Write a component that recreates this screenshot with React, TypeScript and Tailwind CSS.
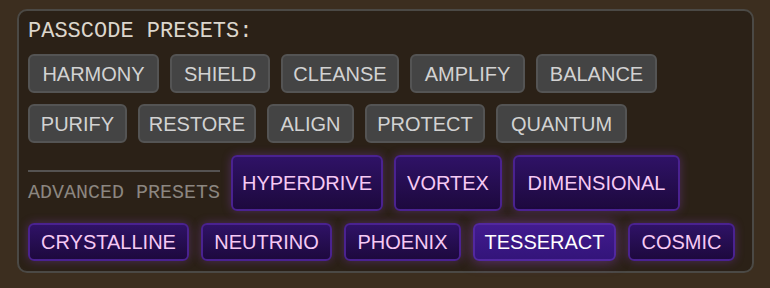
import {FunctionComponent} from 'react'

type Preset = {name: string; w: string}

const basicRows: Preset[][] = [
  [
    {name: 'HARMONY', w: 'w-[131px]'},
    {name: 'SHIELD', w: 'w-[100px]'},
    {name: 'CLEANSE', w: 'w-[118px]'},
    {name: 'AMPLIFY', w: 'w-[115px]'},
    {name: 'BALANCE', w: 'w-[121px]'},
  ],
  [
    {name: 'PURIFY', w: 'w-[99px]'},
    {name: 'RESTORE', w: 'w-[118px]'},
    {name: 'ALIGN', w: 'w-[87px]'},
    {name: 'PROTECT', w: 'w-[120px]'},
    {name: 'QUANTUM', w: 'w-[131px]'},
  ],
]

const advancedTop: Preset[] = [
  {name: 'HYPERDRIVE', w: 'w-[152px]'},
  {name: 'VORTEX', w: 'w-[108px]'},
  {name: 'DIMENSIONAL', w: 'w-[167px]'},
]

const advancedBottom: Preset[] = [
  {name: 'CRYSTALLINE', w: 'w-[161px]'},
  {name: 'NEUTRINO', w: 'w-[131px]'},
  {name: 'PHOENIX', w: 'w-[117px]'},
  {name: 'TESSERACT', w: 'w-[143px]'},
  {name: 'COSMIC', w: 'w-[107px]'},
]

const BasicButton: FunctionComponent<{preset: Preset}> = ({preset}) => (
  <button
    className={`${preset.w} h-[39px] flex items-center justify-center rounded-[6px] border-2 border-[#545454] bg-[#444444] font-[family-name:Liberation_Sans,Arial,sans-serif] text-[20px] text-[#d2d2d2]`}
  >
    {preset.name}
  </button>
)

const AdvancedButton: FunctionComponent<{preset: Preset; tall?: boolean; active?: boolean}> = ({
  preset,
  tall,
  active,
}) => (
  <button
    className={`${preset.w} ${tall ? 'h-[56px]' : 'h-[38px]'} flex items-center justify-center rounded-[6px] border-2 font-[family-name:Liberation_Sans,Arial,sans-serif] text-[20px] ${
      active
        ? 'border-[#52289f] bg-gradient-to-b from-[#421b8f] to-[#33147a] text-white shadow-[0_0_14px_rgba(150,70,210,0.55)]'
        : 'border-[#4a2290] bg-gradient-to-b from-[#2f1266] to-[#1d093e] text-[#f6c9f4] shadow-[0_0_10px_rgba(130,60,190,0.4)]'
    }`}
  >
    {preset.name}
  </button>
)

const App: FunctionComponent = () => {
  return (
    <div className="w-[770px] h-[288px] bg-[#3c2e1f] pl-[17px] pt-[9px]">
      <div className="w-[737px] h-[264px] rounded-[10px] border-2 border-[#4b4945] bg-[#2b2117] px-[9px] pt-[8px]">
        <div className="font-[family-name:Liberation_Mono,Courier_New,monospace] text-[22px] leading-[26px] text-[#dcd6cc] mb-[9px]">
          PASSCODE PRESETS:
        </div>
        <div className="flex flex-col gap-[11px]">
          {basicRows.map((row, i) => (
            <div key={i} className="flex gap-[11px]">
              {row.map((p) => (
                <BasicButton key={p.name} preset={p} />
              ))}
            </div>
          ))}
        </div>
        <div className="flex gap-[11px] mt-[12px]">
          <div className="w-[192px] flex flex-col pt-[15px]">
            <div className="h-[2px] bg-[#555352]" />
            <div className="mt-[9px] whitespace-nowrap font-[family-name:Liberation_Mono,Courier_New,monospace] text-[20px] leading-[24px] text-[#8b8680]">
              ADVANCED PRESETS
            </div>
          </div>
          {advancedTop.map((p) => (
            <AdvancedButton key={p.name} preset={p} tall />
          ))}
        </div>
        <div className="flex gap-[12px] mt-[12px]">
          {advancedBottom.map((p) => (
            <AdvancedButton key={p.name} preset={p} active={p.name === 'TESSERACT'} />
          ))}
        </div>
      </div>
    </div>
  )
}

export default App
